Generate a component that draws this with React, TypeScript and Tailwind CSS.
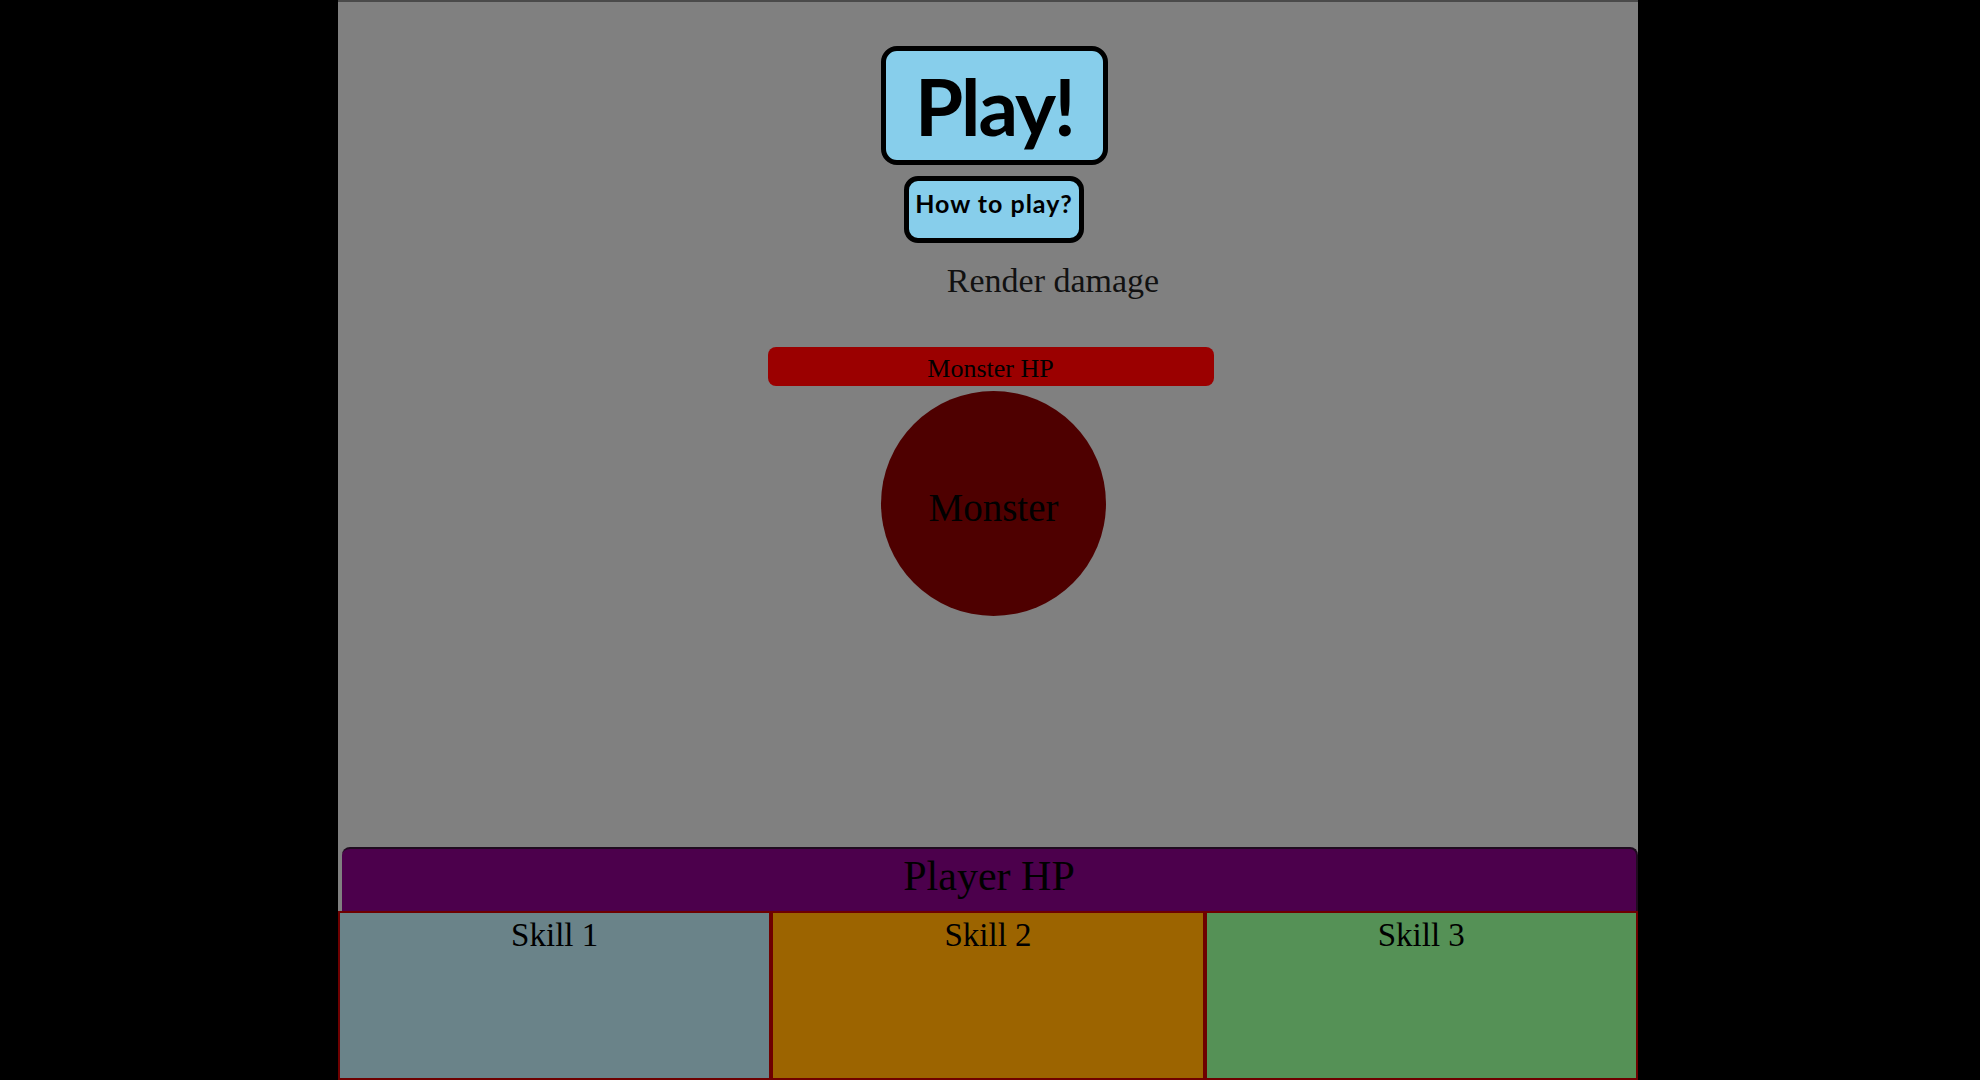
const skills = [
  { name: "Skill 1", color: "bg-[#6a8389]" },
  { name: "Skill 2", color: "bg-[#9c6400]" },
  { name: "Skill 3", color: "bg-[#559156]" },
];

const serif = "font-['Liberation_Serif','Times_New_Roman',serif]";

function Menu() {
  return (
    <div className="flex flex-col items-center">
      <button className="mt-[44px] ml-[13px] flex h-[119px] w-[227px] items-center justify-center rounded-[16px] border-[5px] border-black bg-[#87ceeb] font-['Comic_Sans_MS',Lato,sans-serif] text-[78px] font-bold leading-none tracking-[-2px] text-black">
        Play!
      </button>
      <button className="mt-[11px] ml-[12px] flex h-[67px] w-[180px] items-start justify-center rounded-[14px] border-[5px] border-black bg-[#87ceeb] pt-[10px] font-['Comic_Sans_MS',Lato,sans-serif] text-[25px] font-bold leading-none tracking-[1px] text-black">
        How to play?
      </button>
    </div>
  );
}

function Monster() {
  return (
    <div className="flex flex-col items-center">
      <div className={`mt-[18px] ml-[130px] text-[34px] leading-[1.15] text-[#111] ${serif}`}>
        Render damage
      </div>
      <div className={`mt-[47px] ml-[5px] flex h-[39px] w-[446px] items-center justify-center rounded-[8px] bg-[#9b0000] pt-[4px] text-[26px] leading-none text-black ${serif}`}>
        Monster HP
      </div>
      <div className={`mt-[5px] ml-[11px] flex h-[225px] w-[225px] items-center justify-center rounded-full bg-[#4e0000] pt-[8px] text-[39px] leading-none text-black ${serif}`}>
        Monster
      </div>
    </div>
  );
}

export default function App() {
  return (
    <div className="h-[1080px] w-full overflow-hidden bg-black">
      <div className="ml-[338px] flex h-[1080px] w-[1300px] flex-col border-t-2 border-[#4a4a4a] bg-[#808080]">
        <div className="flex h-[845px] flex-col">
          <Menu />
          <Monster />
        </div>
        <div className={`ml-[4px] flex h-[64px] items-center justify-center rounded-t-[8px] border-t-2 border-r-2 border-[#1f0b1f] bg-[#4c004c] pb-[8px] text-[42px] leading-none text-black ${serif}`}>
          Player HP
        </div>
        <div className="flex flex-1">
          {skills.map((skill) => (
            <div
              key={skill.name}
              className={`flex-1 border-2 border-[#6e0000] ${skill.color} pt-[4px] text-center text-[33px] leading-[1.15] text-black ${serif}`}
            >
              {skill.name}
            </div>
          ))}
        </div>
      </div>
    </div>
  );
}
